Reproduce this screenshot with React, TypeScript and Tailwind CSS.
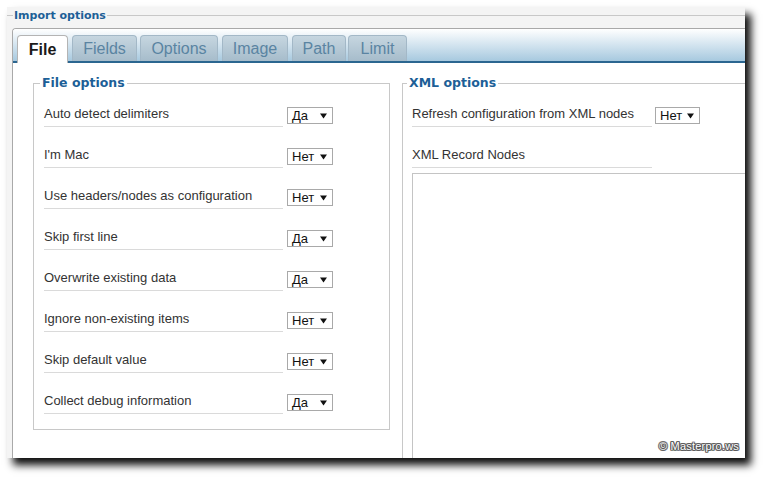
import React from "react";

const Arrow = () => (
  <svg width="7" height="6" viewBox="0 0 7 6" className="block">
    <polygon points="0,0.5 7,0.5 3.5,5.5" fill="#111" />
  </svg>
);

const Select = ({ value, w }: { value: string; w: string }) => (
  <div
    className={`${w} h-[17px] mt-[1px] border border-[#a9a9a9] bg-white flex items-center justify-between pl-[4px] pr-[5px] text-[13px] leading-none text-[#111]`}
  >
    <span>{value}</span>
    <Arrow />
  </div>
);

const Row = ({
  label,
  value,
  lw,
  gap,
  sw,
}: {
  label: string;
  value?: string;
  lw: string;
  gap: string;
  sw: string;
}) => (
  <div className="flex items-start">
    <div className={`${lw} leading-[15px] pb-[5px] border-b border-[#dadada] text-[13px] text-[#333]`}>{label}</div>
    {value ? (
      <div className={gap}>
        <Select value={value} w={sw} />
      </div>
    ) : null}
  </div>
);

const Legend = ({ text, ml }: { text: string; ml: string }) => (
  <legend
    className={`${ml} px-[2px] leading-[16px] text-[12.5px] font-bold text-[#1d5f97]`}
    style={{ fontFamily: '"DejaVu Sans", sans-serif' }}
  >
    {text}
  </legend>
);

const tabs = [
  { name: "Fields", cls: "ml-[4px] w-[65px]" },
  { name: "Options", cls: "ml-[3px] w-[78px]" },
  { name: "Image", cls: "ml-[4px] w-[66px]" },
  { name: "Path", cls: "ml-[4px] w-[54px]" },
  { name: "Limit", cls: "ml-[2px] w-[59px]" },
];

const leftRows: [string, string][] = [
  ["Auto detect delimiters", "Да"],
  ["I'm Mac", "Нет"],
  ["Use headers/nodes as configuration", "Нет"],
  ["Skip first line", "Да"],
  ["Overwrite existing data", "Да"],
  ["Ignore non-existing items", "Нет"],
  ["Skip default value", "Нет"],
  ["Collect debug information", "Да"],
];

export default function App() {
  return (
    <div
      className="w-[768px] h-[481px] bg-white pl-[7px] pt-[7px] overflow-hidden"
      style={{ fontFamily: '"Liberation Sans", Arial, sans-serif' }}
    >
      <div className="relative w-[738px] h-[451px] bg-[#f4f4f4] shadow-[6px_7px_8px_rgba(0,0,0,0.95)] overflow-hidden flex flex-col pt-[2px]">
        {/* Import options legend */}
        <div className="flex items-start h-[14px] shrink-0">
          <div className="w-[6px] h-px mt-[6px] bg-[#c8c8c8]" />
          <span
            className="px-[1px] leading-[14px] text-[11px] font-bold text-[#1d5f97]"
            style={{ fontFamily: '"DejaVu Sans", sans-serif' }}
          >
            Import options
          </span>
          <div className="flex-1 h-px mt-[6px] bg-[#c8c8c8]" />
        </div>

        {/* Tab container */}
        <div className="ml-[5px] mt-[5px] flex-1 flex flex-col border-l border-t border-[#a9a9a9] rounded-tl-[4px] overflow-hidden">
          <div className="h-[34px] shrink-0 flex items-start pt-[6px] pl-[4px] border-b-2 border-[#2b6690] bg-gradient-to-b from-[#ffffff] to-[#a7c9df]">
            <div className="relative z-10 w-[51px] h-[28px] bg-white border border-b-0 border-[#b4b4b4] rounded-t-[4px] text-center leading-[27px] text-[16px] font-bold text-[#1a1a1a]">
              File
            </div>
            {tabs.map((t) => (
              <div
                key={t.name}
                className={`${t.cls} h-[26px] bg-gradient-to-b from-[#c6d6e0] to-[#a6bccb] border border-b-0 border-[#a3b8c7] rounded-t-[4px] text-center leading-[26px] text-[16px] text-[#5a84a2]`}
              >
                {t.name}
              </div>
            ))}
          </div>

          <div className="flex-1 bg-white flex items-start pl-[20px] pt-[12px]">
            {/* File options */}
            <fieldset className="w-[357px] border border-[#c8c8c8] shrink-0">
              <Legend text="File options" ml="ml-[6px]" />
              <div className="pt-[15px] pl-[10px] pb-[15px] flex flex-col gap-[20px]">
                {leftRows.map(([l, v]) => (
                  <Row key={l} label={l} value={v} lw="w-[239px]" gap="ml-[4px]" sw="w-[46px]" />
                ))}
              </div>
            </fieldset>

            {/* XML options */}
            <fieldset className="ml-[12px] w-[420px] h-[420px] border border-[#c8c8c8] shrink-0">
              <Legend text="XML options" ml="ml-[4px]" />
              <div className="pt-[15px] pl-[9px] flex flex-col">
                <Row
                  label="Refresh configuration from XML nodes"
                  value="Нет"
                  lw="w-[240px]"
                  gap="ml-[3px]"
                  sw="w-[45px]"
                />
                <div className="mt-[20px]">
                  <Row label="XML Record Nodes" lw="w-[240px]" gap="" sw="" />
                </div>
                <div className="mt-[5px] w-[400px] h-[300px] border border-[#c4c4c4] bg-white" />
              </div>
            </fieldset>
          </div>
        </div>

        <div
          className="absolute right-[6px] bottom-[6px] text-[11px] leading-[12px] text-white tracking-[0.2px] [text-shadow:1px_0_#555,-1px_0_#555,0_1px_#555,0_-1px_#555,1px_1px_#777,-1px_-1px_#777,1px_-1px_#777,-1px_1px_#777]"
        >
          © Masterpro.ws
        </div>
      </div>
    </div>
  );
}
